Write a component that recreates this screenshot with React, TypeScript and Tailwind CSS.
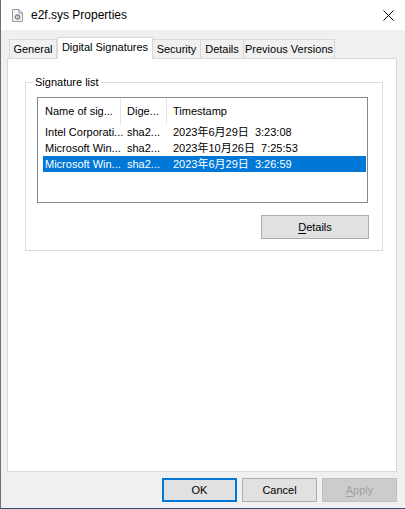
const rows = [
  { name: "Intel Corporati...", digest: "sha2...", time: "2023年6月29日  3:23:08", selected: false },
  { name: "Microsoft Win...", digest: "sha2...", time: "2023年10月26日  7:25:53", selected: false },
  { name: "Microsoft Win...", digest: "sha2...", time: "2023年6月29日  3:26:59", selected: true },
]

const tabs = [
  { label: "General", w: "w-[48px]" },
  { label: "Digital Signatures", w: "w-[96px]", active: true },
  { label: "Security", w: "w-[49px]" },
  { label: "Details", w: "w-[44px]" },
  { label: "Previous Versions", w: "w-[92px]" },
]

const FileIcon = () => (
  <svg width="11" height="13" viewBox="0 0 11 13">
    <path d="M0.5 0.5h6.5l3.5 3.5v8.5h-10z" fill="#f4f4f4" stroke="#9a9a9a" />
    <path d="M7 0.5v3.5h3.5" fill="none" stroke="#9a9a9a" />
    <circle cx="5.5" cy="8" r="2.2" fill="none" stroke="#7a7a7a" strokeWidth="1.2" />
    <circle cx="5.5" cy="8" r="0.7" fill="#7a7a7a" />
  </svg>
)

const CloseIcon = () => (
  <svg width="11" height="11" viewBox="0 0 11 11" className="ml-auto">
    <path d="M0.5 0.5L10.5 10.5M10.5 0.5L0.5 10.5" stroke="#000" strokeWidth="1" />
  </svg>
)

export default function App() {
  return (
    <div className="w-[405px] h-[509px] bg-[#f0f0f0] border-l border-[#707070] border-b border-b-[#2f5077] flex flex-col font-['Liberation_Sans',sans-serif] text-[11px] text-black">
      {/* title bar */}
      <div className="h-[30px] bg-white flex items-center pl-[11px] pr-[11px] shrink-0">
        <FileIcon />
        <span className="ml-[8px] text-[12px]">e2f.sys Properties</span>
        <CloseIcon />
      </div>

      {/* tabs */}
      <div className="flex items-end pl-[8px] mt-[7px] h-[21px] relative z-10">
        {tabs.map((t) =>
          t.active ? (
            <div
              key={t.label}
              className={`${t.w} h-[22px] -mb-[1px] bg-white border border-b-0 border-[#d9d9d9] flex items-center justify-center pb-[2px]`}
            >
              {t.label}
            </div>
          ) : (
            <div
              key={t.label}
              className={`${t.w} h-[19px] bg-[#f0f0f0] border border-b-0 border-[#d9d9d9] -ml-px first:ml-0 flex items-center justify-center pt-[1px]`}
            >
              {t.label}
            </div>
          )
        )}
      </div>

      {/* tab page */}
      <div className="ml-[6px] mr-[8px] h-[414px] bg-white border border-[#d9d9d9] flex flex-col">
        <div className="relative mt-[23px] ml-[17px] w-[358px] border border-[#dcdcdc] pb-[11px] flex flex-col">
          <span className="absolute left-[7px] -top-[8px] bg-white px-[2px] leading-[14px]">Signature list</span>

          <div className="mt-[14px] ml-[11px] w-[331px] h-[106px] border border-[#828790] bg-white flex flex-col">
            <div className="h-[26px] flex items-stretch shrink-0">
              <div className="w-[83px] pl-[7px] flex items-center border-r border-[#e5e5e5]">Name of sig...</div>
              <div className="w-[46px] pl-[6px] flex items-center border-r border-[#e5e5e5]">Dige...</div>
              <div className="flex-1 pl-[6px] flex items-center">Timestamp</div>
            </div>
            <div className="flex flex-col">
              {rows.map((r, i) => (
                <div
                  key={i}
                  className={`h-[16px] ml-[5px] mr-[1px] flex items-center ${r.selected ? "bg-[#0078d7] text-white" : ""}`}
                >
                  <div className="w-[78px] pl-[2px] whitespace-nowrap">{r.name}</div>
                  <div className="w-[46px] pl-[6px] whitespace-nowrap">{r.digest}</div>
                  <div className="pl-[6px] whitespace-pre font-['Liberation_Sans','Noto_Sans_CJK_JP',sans-serif]">{r.time}</div>
                </div>
              ))}
            </div>
          </div>

          <button className="self-end mt-[12px] mr-[13px] w-[108px] h-[24px] bg-[#e1e1e1] border border-[#adadad] flex items-center justify-center">
            <span><span className="underline underline-offset-2">D</span>etails</span>
          </button>
        </div>
      </div>

      {/* dialog buttons */}
      <div className="flex justify-end gap-[5px] pr-[8px] mt-[6px]">
        <button className="w-[75px] h-[24px] bg-[#e1e1e1] border-2 border-[#0078d7] flex items-center justify-center">OK</button>
        <button className="w-[75px] h-[24px] bg-[#e1e1e1] border border-[#adadad] flex items-center justify-center">Cancel</button>
        <button className="w-[75px] h-[24px] bg-[#cccccc] border border-[#bfbfbf] text-[#a0a0a0] flex items-center justify-center">
          <span><span className="underline underline-offset-2">A</span>pply</span>
        </button>
      </div>
    </div>
  )
}
